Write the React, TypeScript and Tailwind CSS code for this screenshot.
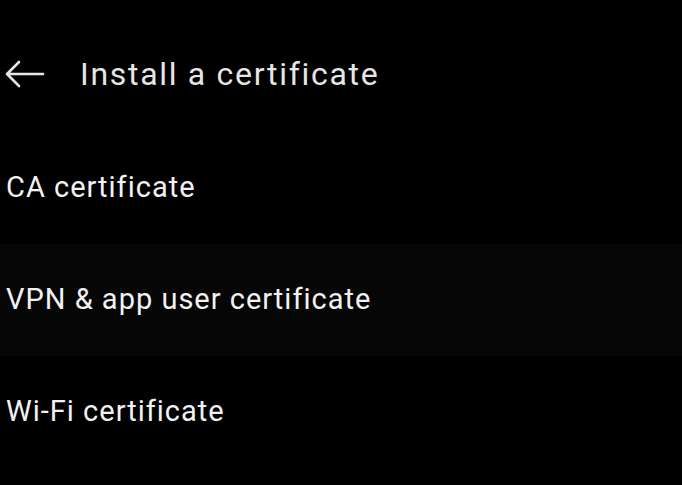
export default function App() {
  const items = ["CA certificate", "VPN & app user certificate", "Wi-Fi certificate"];
  return (
    <div className="w-[682px] h-[485px] bg-black overflow-hidden font-['Roboto',sans-serif]">
      <div className="h-[132px] pt-4 flex items-center">
        <svg width="44" height="28" viewBox="0 0 44 28" className="ml-[4px]" fill="none" stroke="#e6e6e6" strokeWidth="2.6" strokeLinecap="round" strokeLinejoin="round">
          <path d="M39 14H3M15 2L3 14l12 12" />
        </svg>
        <h1 className="ml-[32px] text-[32px] text-[#e6e6e6] tracking-[1.7px]">Install a certificate</h1>
      </div>
      <div className="flex flex-col">
        {items.map((t, i) => (
          <div key={t} className={`h-[112px] flex items-center pl-[6px] ${i === 1 ? "bg-[#060606]" : ""}`}>
            <span className="text-[29px] text-[#f2f2f2] tracking-[1px]">{t}</span>
          </div>
        ))}
      </div>
    </div>
  );
}
